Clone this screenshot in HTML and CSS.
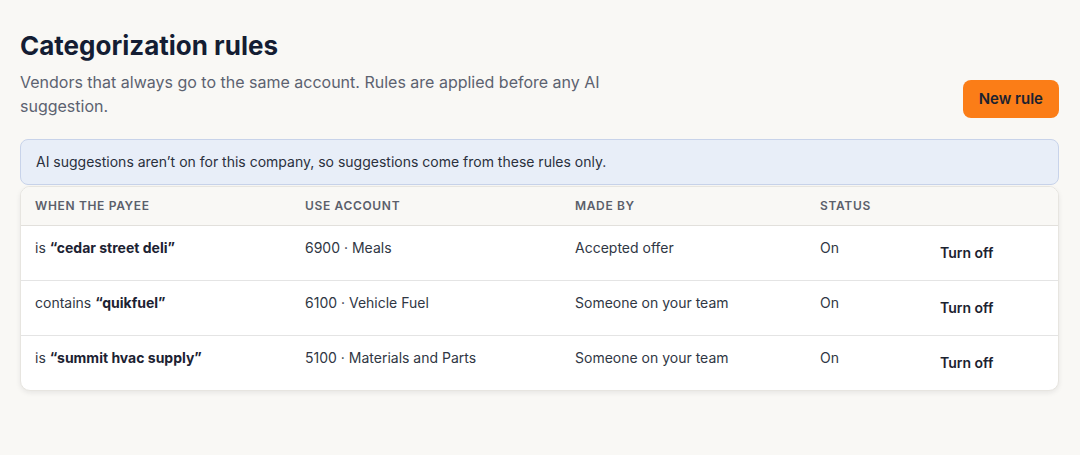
FILE: index.html
```html
<!DOCTYPE html>
<html lang="en">
<head>
<meta charset="utf-8">
<title>Categorization rules</title>
<link rel="stylesheet" href="styles.css">
</head>
<body>
<main class="page">
  <header class="page-head">
    <div class="head-text">
      <h1 class="title">Categorization rules</h1>
      <p class="subtitle">Vendors that always go to the same account. Rules are applied before any AI suggestion.</p>
    </div>
    <button class="btn-primary" type="button">New rule</button>
  </header>

  <div class="banner">AI suggestions aren’t on for this company, so suggestions come from these rules only.</div>

  <div class="card">
    <table class="rules">
      <colgroup>
        <col class="c1"><col class="c2"><col class="c3"><col class="c4"><col class="c5">
      </colgroup>
      <thead>
        <tr>
          <th>When the payee</th>
          <th>Use account</th>
          <th>Made by</th>
          <th>Status</th>
          <th></th>
        </tr>
      </thead>
      <tbody>
        <tr>
          <td>is <strong>“cedar street deli”</strong></td>
          <td>6900 · Meals</td>
          <td>Accepted offer</td>
          <td>On</td>
          <td><button class="btn-link" type="button">Turn off</button></td>
        </tr>
        <tr>
          <td>contains <strong>“quikfuel”</strong></td>
          <td>6100 · Vehicle Fuel</td>
          <td>Someone on your team</td>
          <td>On</td>
          <td><button class="btn-link" type="button">Turn off</button></td>
        </tr>
        <tr>
          <td>is <strong>“summit hvac supply”</strong></td>
          <td>5100 · Materials and Parts</td>
          <td>Someone on your team</td>
          <td>On</td>
          <td><button class="btn-link" type="button">Turn off</button></td>
        </tr>
      </tbody>
    </table>
  </div>
</main>
</body>
</html>
```

FILE: styles.css
```css
* { box-sizing: border-box; }

html, body {
  margin: 0;
  padding: 0;
  background: #f9f8f5;
  font-family: Inter, "Noto Sans", "Liberation Sans", sans-serif;
  color: #1f2633;
}

.page {
  padding: 30px 21px 40px 20px;
}

.page-head {
  display: flex;
  justify-content: space-between;
  align-items: flex-end;
  margin-bottom: 21px;
}

.title {
  margin: 0 0 8px;
  font-size: 26px;
  line-height: 32px;
  font-weight: 700;
  color: #141d33;
}

.subtitle {
  margin: 0;
  max-width: 600px;
  font-size: 16px;
  line-height: 24px;
  color: #5c6270;
}

.btn-primary {
  flex: none;
  white-space: nowrap;
  font-family: inherit;
  font-size: 15px;
  font-weight: 600;
  line-height: 20px;
  color: #1c2230;
  background: #fb7d17;
  border: none;
  border-radius: 8px;
  padding: 9px 16px;
  height: 38px;
  min-width: 96px;
  cursor: pointer;
}

.banner {
  background: #e8eef8;
  border: 1px solid #c8d3ea;
  border-radius: 8px;
  padding: 12px 15px;
  font-size: 14px;
  line-height: 20px;
  color: #2a303d;
}

.card {
  margin-top: 1px;
  background: #ffffff;
  border: 1px solid #e7e5e0;
  border-radius: 10px;
  overflow: hidden;
  box-shadow: 0 2px 5px rgba(20, 25, 35, 0.08);
}

.rules {
  width: 100%;
  border-collapse: collapse;
  table-layout: fixed;
}

.c1 { width: 269px; }
.c2 { width: 270px; }
.c3 { width: 245px; }
.c4 { width: 108px; }

.rules th {
  background: #f9f8f5;
  text-align: left;
  font-size: 12px;
  line-height: 16px;
  font-weight: 600;
  text-transform: uppercase;
  letter-spacing: 0.055em;
  color: #5b5f6b;
  padding: 11px 15px 11px 15px;
  border-bottom: 1px solid #e2e0dc;
}

.rules th:first-child,
.rules td:first-child { padding-left: 14px; }

.rules td {
  font-size: 14px;
  line-height: 20px;
  color: #303744;
  padding: 12px 15px;
  vertical-align: top;
  border-bottom: 1px solid #e4e4e4;
}

.rules tbody tr:last-child td { border-bottom: none; }

.rules td strong {
  font-weight: 700;
  color: #1c2232;
}

.btn-link {
  font-family: inherit;
  font-size: 14px;
  font-weight: 600;
  line-height: 18px;
  color: #1c2230;
  background: transparent;
  border: none;
  border-radius: 6px;
  padding: 6px 12px;
  cursor: pointer;
}
```
